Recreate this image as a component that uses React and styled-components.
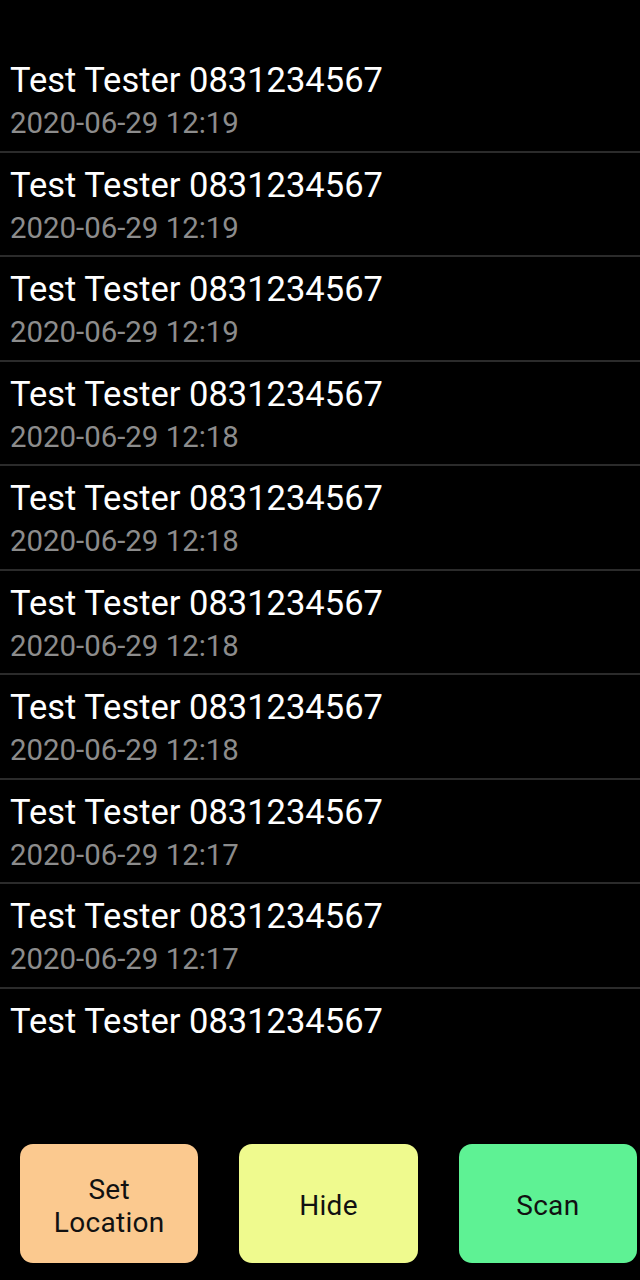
import React from 'react'
import styled, { createGlobalStyle } from 'styled-components'

const GlobalStyle = createGlobalStyle`
    html, body {
        margin: 0;
        padding: 0;
        background: #000;
    }
    #root {
        height: 1280px;
    }
`;

const Screen = styled.div`
    height: 1280px;
    display: flex;
    flex-direction: column;
    background: #000;
    font-family: Roboto, "Noto Sans", sans-serif;
`;

const List = styled.div`
    margin-top: 48px;
    height: 993px;
    overflow: hidden;
`;

const Row = styled.div`
    padding: 12px 10px 0;
    height: 104.5px;
    box-sizing: border-box;
    border-bottom: 2px solid #2b2b2b;
`;

const Name = styled.div`
    color: #fff;
    font-size: 34.5px;
    line-height: 40px;
`;

const Stamp = styled.div`
    color: #8c8c8c;
    font-size: 29.4px;
    line-height: 34px;
    margin-top: 6px;
`;

const ButtonBar = styled.div`
    margin-top: auto;
    display: flex;
    gap: 41px;
    padding: 0 3px 17px 20px;
`;

const Button = styled.button`
    width: 179px;
    height: 119px;
    border: none;
    border-radius: 13px;
    background: ${({ $bg }) => $bg};
    color: #111;
    font-family: Roboto, "Noto Sans", sans-serif;
    font-size: 28px;
    letter-spacing: 0.3px;
    line-height: 33px;
    padding: 4px 6px 0;
    text-align: center;
`;

const entries = [
    '12:19', '12:19', '12:19', '12:18', '12:18',
    '12:18', '12:18', '12:17', '12:17', null,
];

const App = () => {
    return (
        <Screen>
            <GlobalStyle />
            <List>
                {entries.map((time, i) => (
                    <Row key={i}>
                        <Name>Test Tester 0831234567</Name>
                        {time && <Stamp>2020-06-29 {time}</Stamp>}
                    </Row>
                ))}
            </List>
            <ButtonBar>
                <Button $bg="#fbc98f">Set<br />Location</Button>
                <Button $bg="#effa8e">Hide</Button>
                <Button $bg="#5ef294">Scan</Button>
            </ButtonBar>
        </Screen>
    );
};

export default App
